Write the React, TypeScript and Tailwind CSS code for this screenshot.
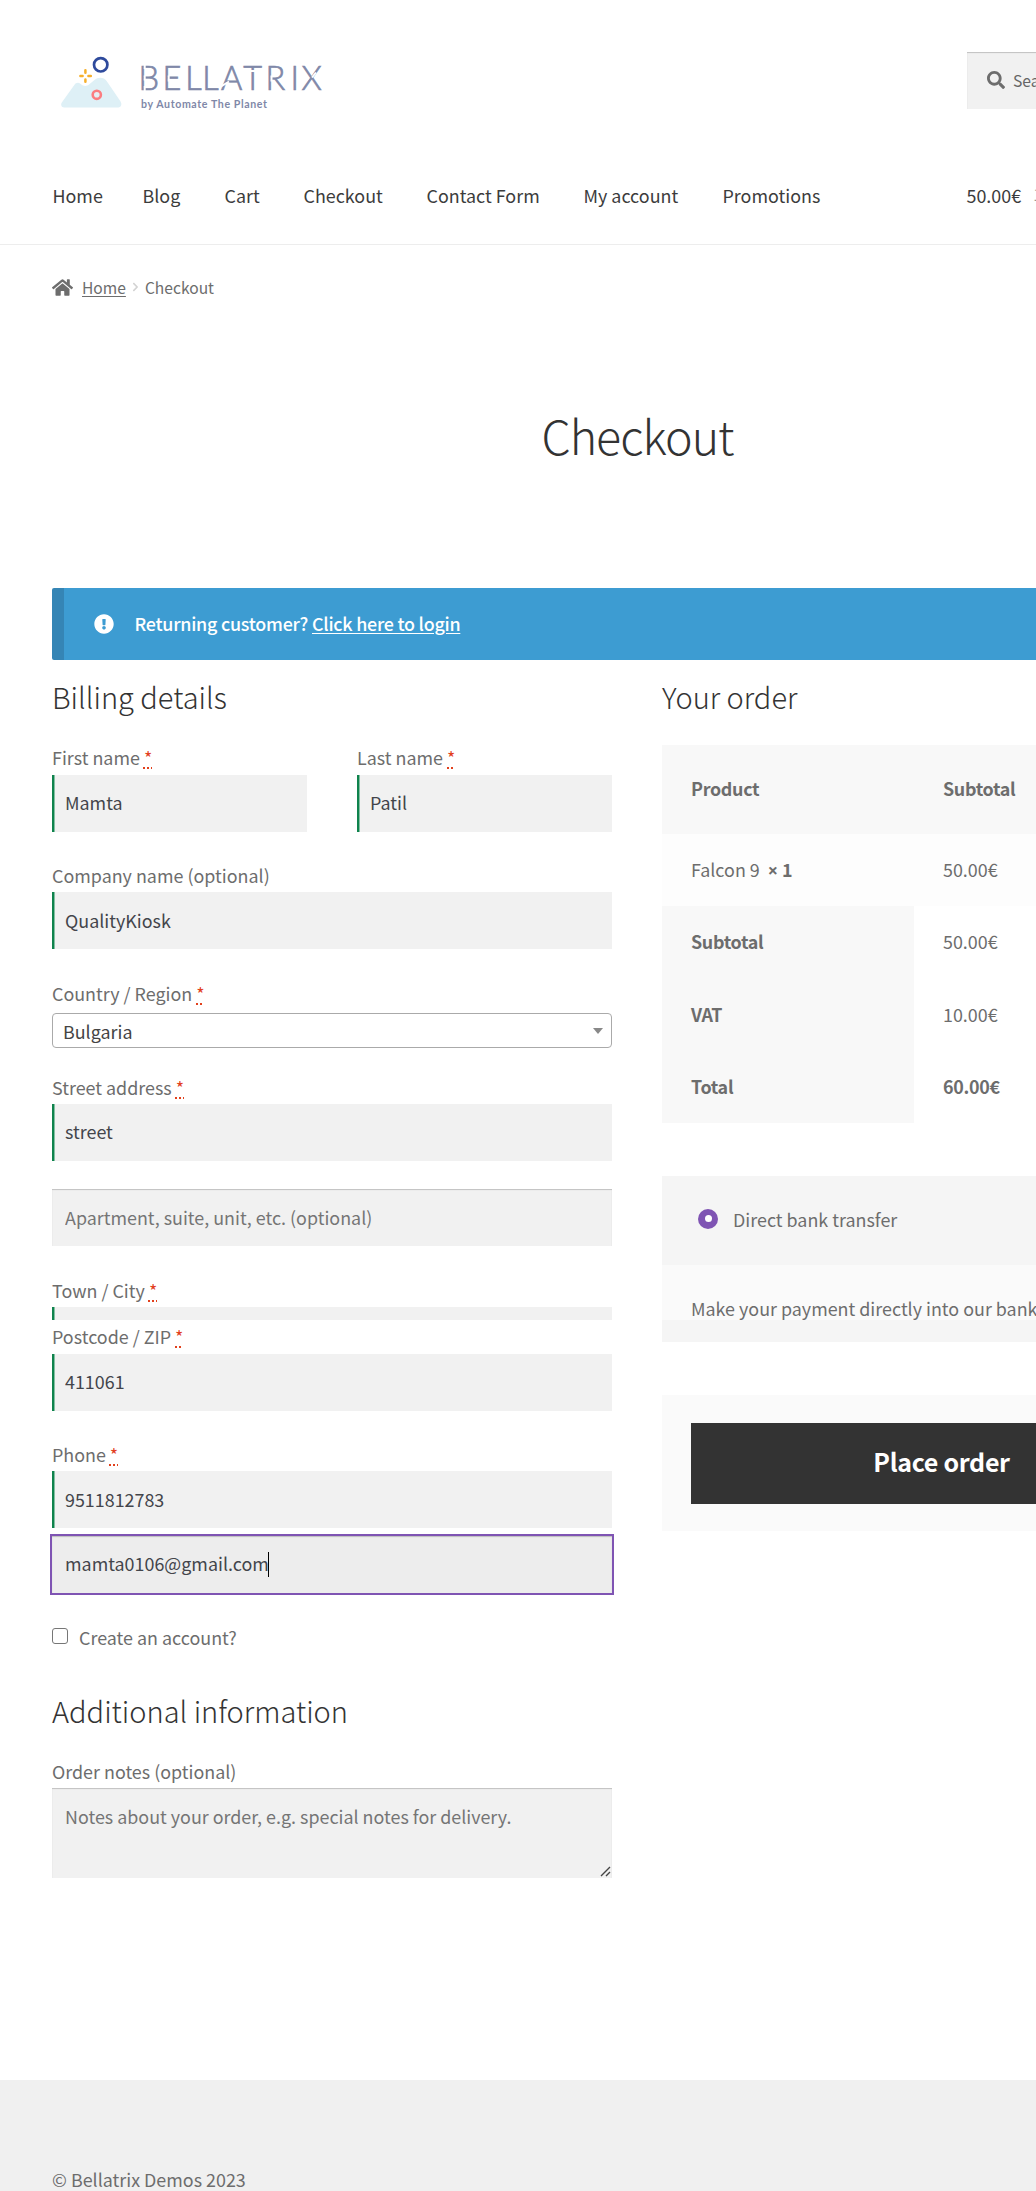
import type { ReactNode } from "react";
import { FaHome, FaSearch, FaExclamationCircle, FaChevronRight } from "react-icons/fa";

const Logo = () => (
  <svg width="300" height="90" viewBox="0 0 300 90" className="block shrink-0" role="img" aria-label="Bellatrix by Automate The Planet">
    <path
      d="M24 67.5C21.5 67.5 20.4 64.8 21.8 62.6L34.5 44.8C36 42.6 38.4 42.2 40.4 43.8C43.4 46.2 46 47 49 44.6L54.5 40C58.5 36.6 64 37.2 66.8 41.2L80.4 61.2C82.4 64.4 81.2 67.5 77.6 67.5Z"
      fill="#def0f6"
    />
    <circle cx="60.7" cy="24.8" r="6.7" fill="#fff" stroke="#2e4a9c" strokeWidth="2.7" />
    <circle cx="56.8" cy="54.8" r="4.1" fill="#e6eef3" stroke="#fb7d80" strokeWidth="2.6" />
    <path d="M45.4 30.3v2.4M45.4 39.4v2.4M40.4 36h2.2M48.4 36h2.4" stroke="#f6b02c" strokeWidth="2.5" strokeLinecap="round" />
    <text
      y="49.7"
      x="98.5 122.5 145.2 162.2 181 203.3 225.5 250.5 261.5"
      fontSize="32.5"
      fontWeight="300"
      fill="#7f88a8"
      stroke="#7f88a8"
      strokeWidth="0.7"
      className="[font-family:Lato,sans-serif]"
    >
      BELLATRIX
    </text>
    <path
      d="M104.7 24v5M104.7 35.5v5M104.7 46v5M128.7 35.5v6M181 46.5l8-5M196 26l3 6M211 31h6M231.5 35.5v6M265 42.5l4 -5M276 32.5l-4 5"
      stroke="#fff"
      strokeWidth="2"
      fill="none"
    />
    <text x="101" y="68.3" fontSize="10.6" fontWeight="700" fill="#7f88a8" textLength="126" className="[font-family:Lato,sans-serif]">
      by Automate The Planet
    </text>
  </svg>
);

const Required = () => (
  <abbr className="text-[#e2401c] underline decoration-dotted decoration-2 underline-offset-[2px] [text-decoration-skip-ink:none]">*</abbr>
);

const Label = ({ children, className }: { children: ReactNode; className: string }) => (
  <label className={`block leading-[26px] text-[#6d6d6d] ${className}`}>{children}</label>
);

const valid = "shadow-[inset_2px_0_0_#0f834d,inset_3px_0_0_#84bfa2]";
const plain = "shadow-[inset_0_1px_1px_rgba(0,0,0,0.2)]";

const Input = ({ value, placeholder, className = "h-[57px] pb-[3px]" }: { value?: string; placeholder?: string; className?: string }) => (
  <input
    defaultValue={value}
    placeholder={placeholder}
    className={`block w-full bg-[#f1f1f1] pr-3 pl-[13px] text-[#43454b] outline-none placeholder:text-[#757575] placeholder:opacity-100 ${value === undefined ? plain : valid} ${className}`}
  />
);

const NAV: [string, string][] = [
  ["Home", "w-[90px]"],
  ["Blog", "w-[82px]"],
  ["Cart", "w-[79px]"],
  ["Checkout", "w-[123px]"],
  ["Contact Form", "w-[157px]"],
  ["My account", "w-[139px]"],
  ["Promotions", "w-[244px]"],
];

const TOTALS: [string, string, string][] = [
  ["Subtotal", "50.00€", ""],
  ["VAT", "10.00€", ""],
  ["Total", "60.00€", "font-bold tracking-[-0.3px]"],
];

export default function App() {
  return (
    <div className="h-[2191px] w-[1036px] overflow-hidden bg-white text-[17.9px] text-[#6d6d6d] [font-family:'Noto_Sans_CJK_SC','Noto_Sans',sans-serif]">
      <header className="h-[245px] w-[1275px] border-b border-[#ededed]">
        <div className="flex h-[170px] items-start pt-10 pl-10">
          <Logo />
          <div className="mt-3 ml-[627px] flex h-[57px] w-[256px] items-center bg-[#f1f1f1] pl-5 shadow-[inset_0_1px_1px_rgba(0,0,0,0.2)]">
            <FaSearch className="size-[18px] -translate-y-px shrink-0" />
            <span className="ml-2 text-[15.7px] text-[#666]">Search products…</span>
          </div>
        </div>
        <nav className="flex pt-[12px] pl-[52.5px] leading-[26px] whitespace-nowrap text-[#3c3c3c]">
          {NAV.map(([name, width]) => (
            <a key={name} className={`shrink-0 ${width}`}>{name}</a>
          ))}
          <span>50.00€</span>
          <span className="ml-3 text-[15.7px] text-[#999]">1 item</span>
        </nav>
      </header>

      <main className="h-[1835px] w-[1223px] pl-[52px]">
        <div className="flex h-[86px] items-center text-[15.6px]">
          <FaHome className="-mt-[2px] size-[21px]" />
          <a className="ml-[9px] underline underline-offset-2">Home</a>
          <FaChevronRight className="mx-[6px] -mt-[2px] h-[10px] w-[7px] text-[#d3d3d3]" />
          <span>Checkout</span>
        </div>
        <h1 className="mt-[71px] h-[66px] text-center text-[46.6px] leading-[66px] font-light tracking-[-1px] text-[#333]">Checkout</h1>

        <div className="mt-[120px] flex h-[72px] items-center rounded-[2px] border-l-[12px] border-[#3585b5] bg-[#3d9cd2] pl-[30px] font-medium tracking-[-0.24px] text-white">
          <FaExclamationCircle className="size-[20px]" />
          <p className="ml-[20.5px] pb-px">
            Returning customer? <a className="underline underline-offset-2">Click here to login</a>
          </p>
        </div>

        <div className="flex items-start">
          <section className="w-[560px] shrink-0">
            <h3 className="mt-[15px] h-[42px] text-[29px] leading-[42px] font-light text-[#333]">Billing details</h3>
            <div className="mt-[27px] flex gap-[50px]">
              <div className="w-[255px]">
                <Label className="h-[31px]">First name <Required /></Label>
                <Input value="Mamta" />
              </div>
              <div className="w-[255px]">
                <Label className="h-[31px]">Last name <Required /></Label>
                <Input value="Patil" />
              </div>
            </div>
            <Label className="mt-[30px] h-[30px]">Company name (optional)</Label>
            <Input value="QualityKiosk" className="h-[57px] pb-[2px]" />
            <Label className="mt-[31px] h-[33px]">Country / Region <Required /></Label>
            <div className="flex h-[35px] items-center justify-between rounded-[4px] border border-[#aaa] pr-[8px] pl-[10px] text-[#444]">
              <span className="pt-[2px]">Bulgaria</span>
              <span className="mt-px border-x-[5px] border-t-[6px] border-x-transparent border-t-[#888]" />
            </div>
            <Label className="mt-[26px] h-[30px]">Street address <Required /></Label>
            <Input value="street" />
            <Input placeholder="Apartment, suite, unit, etc. (optional)" className="mt-[28px] h-[57px] pb-[2px]" />
            <Label className="mt-[31px] h-[30px]">Town / City <Required /></Label>
            <Input value="" className="h-[13px]" />
            <Label className="mt-[3px] h-[31px]">Postcode / ZIP <Required /></Label>
            <Input value="411061" />
            <Label className="mt-[30px] h-[30px]">Phone <Required /></Label>
            <Input value="9511812783" className="h-[57px] pb-[2px]" />
            <div className="-mx-[2px] mt-[6px] flex h-[61px] items-center border-2 border-[#7f54b3] bg-[#ededed] pl-[13px] text-[#43454b] shadow-[inset_0_1px_1px_rgba(0,0,0,0.2)]">
              <span className="pb-[2px]">mamta0106@gmail.com</span>
              <span className="-ml-px h-[25px] w-px bg-black" />
            </div>
            <div className="mt-[29px] flex h-[26px] items-start">
              <span className="mt-[4px] size-[16px] rounded-[3px] border border-[#767676] bg-white" />
              <span className="ml-[11px] leading-[26px]">Create an account?</span>
            </div>
            <h3 className="mt-[39px] h-[42px] text-[29px] leading-[42px] font-light text-[#333]">Additional information</h3>
            <Label className="mt-[27px] h-[30px]">Order notes (optional)</Label>
            <div className="relative">
              <textarea
                placeholder="Notes about your order, e.g. special notes for delivery."
                className="block h-[90px] w-full resize-none bg-[#f1f1f1] pt-[15px] pl-[13px] leading-[26px] shadow-[inset_0_1px_1px_rgba(0,0,0,0.2)] placeholder:text-[#757575] placeholder:opacity-100"
              />
              <svg width="11" height="11" viewBox="0 0 11 11" className="absolute right-px bottom-px">
                <path d="M1 10L10 1M6 10l4-4" stroke="#444" strokeWidth="1.4" fill="none" />
              </svg>
            </div>
          </section>

          <section className="ml-[50px] w-[561px] shrink-0">
            <h3 className="mt-[15px] h-[42px] text-[29px] leading-[42px] font-light text-[#333]">Your order</h3>
            <div className="mt-[28px] grid h-[89px] grid-cols-[252px_1fr] items-center bg-[#f8f8f8] pb-[3px] font-bold tracking-[-0.3px]">
              <span className="pl-[29px]">Product</span>
              <span className="pl-[29px]">Subtotal</span>
            </div>
            <div className="grid h-[72px] grid-cols-[252px_1fr] items-center bg-[#fdfdfd] pb-[2px] leading-[26px]">
              <span className="pl-[29px]">
                Falcon 9 &nbsp;<strong className="font-bold"><span className="[font-family:'Noto_Sans',sans-serif]">×</span> 1</strong>
              </span>
              <span className="pl-[29px]">50.00€</span>
            </div>
            {TOTALS.map(([name, amount, weight]) => (
              <div key={name} className="grid h-[72.33px] grid-cols-[252px_1fr]">
                <span className="flex items-center bg-[#f8f8f8] pb-px pl-[29px] font-bold tracking-[-0.3px]">{name}</span>
                <span className={`flex items-center pb-px pl-[29px] ${weight}`}>{amount}</span>
              </div>
            ))}
            <div className="mt-[53px] h-[166px] bg-[#f5f5f5]">
              <div className="flex h-[89px] items-center pl-[36px]">
                <span className="mb-[3px] flex size-[20px] items-center justify-center rounded-full bg-[#7f54b3]">
                  <span className="size-[7px] rounded-full bg-white" />
                </span>
                <span className="ml-[15px] pb-[3px]">Direct bank transfer</span>
              </div>
              <div className="h-[55px] overflow-hidden bg-[#fafafa] pt-[30px] pl-[29px] leading-[26px] whitespace-nowrap">
                Make your payment directly into our bank account.
              </div>
            </div>
            <div className="mt-[53px] h-[136px] bg-[#fafafa] px-[29px] pt-[28px]">
              <button className="flex h-[81px] w-full items-center justify-center bg-[#333] pr-[2px] pb-[4px] text-[25px] font-bold tracking-[-0.3px] text-white">Place order</button>
            </div>
          </section>
        </div>
      </main>

      <footer className="h-[111px] w-[1275px] bg-[#f0f0f0] pt-[86px] pl-[52px] leading-[26px]">© Bellatrix Demos 2023</footer>
    </div>
  );
}
